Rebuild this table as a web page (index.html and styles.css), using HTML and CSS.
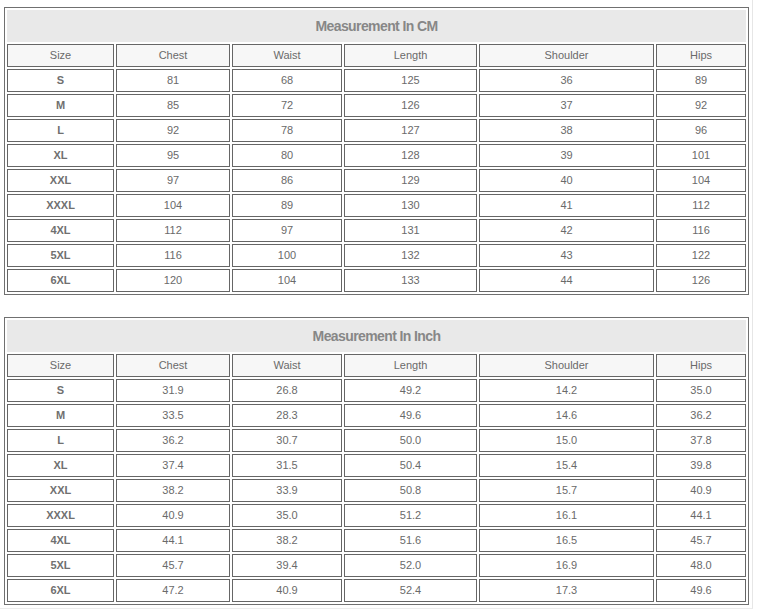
FILE: index.html
```html
<!DOCTYPE html>
<html>
<head>
<meta charset="utf-8">
<link rel="stylesheet" href="styles.css">
</head>
<body>
<div class="page">
  <table class="size-table">
    <colgroup>
      <col class="c-size"><col class="c-chest"><col class="c-waist"><col class="c-length"><col class="c-shoulder"><col class="c-hips">
    </colgroup>
    <tr><td class="title" colspan="6">Measurement In CM</td></tr>
    <tr class="head"><td>Size</td><td>Chest</td><td>Waist</td><td>Length</td><td>Shoulder</td><td>Hips</td></tr>
    <tr><td class="sz">S</td><td>81</td><td>68</td><td>125</td><td>36</td><td>89</td></tr>
    <tr><td class="sz">M</td><td>85</td><td>72</td><td>126</td><td>37</td><td>92</td></tr>
    <tr><td class="sz">L</td><td>92</td><td>78</td><td>127</td><td>38</td><td>96</td></tr>
    <tr><td class="sz">XL</td><td>95</td><td>80</td><td>128</td><td>39</td><td>101</td></tr>
    <tr><td class="sz">XXL</td><td>97</td><td>86</td><td>129</td><td>40</td><td>104</td></tr>
    <tr><td class="sz">XXXL</td><td>104</td><td>89</td><td>130</td><td>41</td><td>112</td></tr>
    <tr><td class="sz">4XL</td><td>112</td><td>97</td><td>131</td><td>42</td><td>116</td></tr>
    <tr><td class="sz">5XL</td><td>116</td><td>100</td><td>132</td><td>43</td><td>122</td></tr>
    <tr><td class="sz">6XL</td><td>120</td><td>104</td><td>133</td><td>44</td><td>126</td></tr>
  </table>

  <table class="size-table second">
    <colgroup>
      <col class="c-size"><col class="c-chest"><col class="c-waist"><col class="c-length"><col class="c-shoulder"><col class="c-hips">
    </colgroup>
    <tr><td class="title" colspan="6">Measurement In Inch</td></tr>
    <tr class="head"><td>Size</td><td>Chest</td><td>Waist</td><td>Length</td><td>Shoulder</td><td>Hips</td></tr>
    <tr><td class="sz">S</td><td>31.9</td><td>26.8</td><td>49.2</td><td>14.2</td><td>35.0</td></tr>
    <tr><td class="sz">M</td><td>33.5</td><td>28.3</td><td>49.6</td><td>14.6</td><td>36.2</td></tr>
    <tr><td class="sz">L</td><td>36.2</td><td>30.7</td><td>50.0</td><td>15.0</td><td>37.8</td></tr>
    <tr><td class="sz">XL</td><td>37.4</td><td>31.5</td><td>50.4</td><td>15.4</td><td>39.8</td></tr>
    <tr><td class="sz">XXL</td><td>38.2</td><td>33.9</td><td>50.8</td><td>15.7</td><td>40.9</td></tr>
    <tr><td class="sz">XXXL</td><td>40.9</td><td>35.0</td><td>51.2</td><td>16.1</td><td>44.1</td></tr>
    <tr><td class="sz">4XL</td><td>44.1</td><td>38.2</td><td>51.6</td><td>16.5</td><td>45.7</td></tr>
    <tr><td class="sz">5XL</td><td>45.7</td><td>39.4</td><td>52.0</td><td>16.9</td><td>48.0</td></tr>
    <tr><td class="sz">6XL</td><td>47.2</td><td>40.9</td><td>52.4</td><td>17.3</td><td>49.6</td></tr>
  </table>
</div>
</body>
</html>
```
FILE: styles.css
```css
html, body {
  margin: 0;
  padding: 0;
  background: #ffffff;
}

.page {
  width: 753px;
  height: 609px;
  box-sizing: border-box;
  padding: 7px 0 0 4px;
  border-right: 1px solid #e6e6e6;
  border-bottom: 1px solid #ececec;
  font-family: "Liberation Sans", Arial, sans-serif;
}

.size-table {
  width: 745px;
  table-layout: fixed;
  border-collapse: separate;
  border-spacing: 2px;
  border: 1px solid #707070;
  margin: 0;
}

.size-table.second {
  margin-top: 22px;
}

.c-size { width: 107px; }
.c-chest { width: 114px; }
.c-waist { width: 110px; }
.c-length { width: 133px; }
.c-shoulder { width: 175px; }
.c-hips { width: 90px; }

.size-table td {
  border: 1px solid #666666;
  padding: 0;
  height: 21px;
  line-height: 21px;
  text-align: center;
  font-size: 11px;
  color: #6a6a6a;
  background: #ffffff;
  overflow: hidden;
  white-space: nowrap;
}

.size-table td.title {
  height: 30px;
  line-height: 30px;
  background: #e9e9e9;
  border-color: #e9e9e9;
  color: #878787;
  font-size: 14px;
  font-weight: bold;
  letter-spacing: -0.6px;
}

.size-table tr.head td {
  background: #f7f7f7;
}

.size-table td.sz {
  font-weight: bold;
  color: #707070;
}
```
